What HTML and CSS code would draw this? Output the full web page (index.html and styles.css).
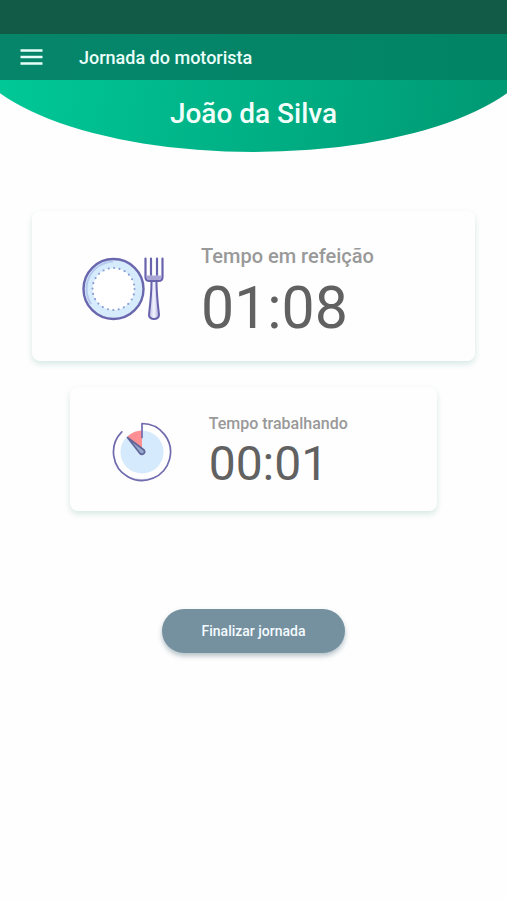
FILE: index.html
```html
<!DOCTYPE html>
<html lang="pt-BR">
<head>
    <meta charset="UTF-8">
    <meta name="viewport" content="width=device-width, initial-scale=1.0">
    <title>Jornada do motorista</title>
    <link rel="stylesheet" href="styles.css">
</head>
<body>
    <div class="status-bar"></div>
    <header class="app-bar">
        <button class="menu-btn" type="button" aria-label="Menu">
            <svg viewBox="0 0 22 16">
                <path d="M0 1.5h22M0 8h22M0 14.5h22"/>
            </svg>
        </button>
        <h1>Jornada do motorista</h1>
    </header>
    <div class="hero">
        <h2>João da Silva</h2>
    </div>

    <main class="content">
        <section class="card card-large">
            <!-- Plate and fork -->
            <svg class="meal-icon" viewBox="0 0 82 64">
                <defs>
                    <linearGradient id="handle" x1="0" x2="1" y1="0" y2="0">
                        <stop offset="0" stop-color="#b9b6e0"/>
                        <stop offset="0.5" stop-color="#f4f5ff"/>
                        <stop offset="1" stop-color="#a9a6d6"/>
                    </linearGradient>
                </defs>
                <circle cx="31.5" cy="32" r="30" fill="#d6ebfc" stroke="#6a67ae" stroke-width="2.4"/>
                <path d="M9 47A27.5 27.5 0 0 1 31 4.5" fill="none" stroke="#b5c9ee" stroke-width="2"/>
                <circle cx="31.5" cy="32" r="21" fill="#fff"/>
                <circle cx="31.5" cy="32" r="21" fill="none" stroke="#8ba0d5" stroke-width="2.2" stroke-linecap="round" stroke-dasharray="0 5.498"/>
                <path d="M63.5 1.5V20q0 4 4 4h9q4 0 4-4V1.5M69 1.5V18M75 1.5V18" fill="none" stroke="#6863ad" stroke-width="2.2" stroke-linecap="round"/>
                <path d="M64.5 18.500h15q0 4.500-3 4.500h-9q-3 0-3-4.500z" fill="#a9a6d6"/>
                <path d="M69.5 24h5q0 13 2.5 33.500c.5 6-10.500 6-10 0Q69.500 37 69.500 24z" fill="url(#handle)" stroke="#6863ad" stroke-width="2" stroke-linejoin="round"/>
            </svg>
            <div class="card-text">
                <p class="label">Tempo em refeição</p>
                <p class="time">01:08</p>
            </div>
        </section>

        <section class="card card-small">
            <!-- Stopwatch -->
            <svg class="clock-icon" viewBox="0 0 60 60">
                <circle cx="30" cy="30" r="21.5" fill="#d6eafd"/>
                <path d="M30 30L15.5 14.5A21.5 21.5 0 0 1 30 8.5z" fill="#ff8f92"/>
                <path d="M8 48A28 28 0 0 0 52 48A29 26 0 0 1 8 48z" fill="#cdcce8"/>
                <path d="M30 15.5V1.5A28.5 28.5 0 1 1 9.8 9.9" fill="none" stroke="#6f6bae" stroke-width="1.7" stroke-linejoin="round" stroke-linecap="round"/>
                <path d="M15.500 15.500L32 28q1.500 2-.3 3.600t-3.700-.1z" fill="#94a9cc" stroke="#5f6499" stroke-width="1.7" stroke-linejoin="round"/>
            </svg>
            <div class="card-text">
                <p class="label">Tempo trabalhando</p>
                <p class="time">00:01</p>
            </div>
        </section>

        <button class="finish-btn" type="button">Finalizar jornada</button>
    </main>
</body>
</html>
```
FILE: styles.css
```css
* {
    box-sizing: border-box;
}
body {
    margin: 0;
    min-height: 100vh;
    background: #fefefe;
    font-family: Roboto, Arial, sans-serif;
}
h1, h2, p {
    margin: 0;
}
.status-bar {
    height: 34px;
    background: #115b47;
}
.app-bar {
    display: flex;
    align-items: center;
    gap: 36px;
    height: 46px;
    padding: 0 20px;
    background: linear-gradient(90deg, #06856a, #018465);
}
.app-bar h1 {
    color: #eafff9;
    font-size: 18px;
    font-weight: 500;
}
.menu-btn {
    display: flex;
    padding: 0;
    border: none;
    background: none;
    cursor: pointer;
}
.menu-btn svg {
    width: 23px;
    height: 16px;
    stroke: #e6fff8;
    stroke-width: 2.5;
}
.hero {
    height: 72px;
    padding-top: 16px;
    background: linear-gradient(100deg, #00c897, #009873);
    clip-path: ellipse(57% 113px at 50% -41px);
    text-align: center;
}
.hero h2 {
    color: #f2fffb;
    font-size: 28px;
    font-weight: 500;
    line-height: 36px;
}
.content {
    display: flex;
    flex-direction: column;
    align-items: center;
    padding: 59px 32px 32px;
}
.card {
    display: flex;
    align-items: center;
    padding-top: 6px;
    background: #fefefe;
    border-radius: 8px;
    box-shadow: 0 3px 6px rgba(0, 120, 95, 0.16);
}
.card-large {
    width: 100%;
    height: 150px;
    padding-left: 50px;
    gap: 37px;
}
.card-small {
    width: 83%;
    height: 124px;
    margin-top: 26px;
    padding-left: 42px;
    gap: 37px;
}
.meal-icon {
    width: 82px;
    height: 64px;
}
.clock-icon {
    width: 60px;
    height: 60px;
}
.label {
    color: #999;
    font-size: 16px;
    font-weight: 500;
    line-height: 24px;
}
.time {
    color: #616161;
    font-size: 48px;
    line-height: 56px;
}
.card-large .card-text {
    padding-top: 10px;
}
.card-large .label {
    margin-bottom: 4px;
    font-size: 20px;
}
.card-large .time {
    font-size: 59px;
    line-height: 72px;
}
.finish-btn {
    height: 44px;
    margin-top: 98px;
    padding: 0 40px;
    border: none;
    border-radius: 22px;
    background: #75919f;
    box-shadow: 0 3px 5px rgba(40, 80, 100, 0.35);
    color: #f4fbff;
    font-family: inherit;
    font-size: 14px;
    font-weight: 500;
    cursor: pointer;
}
```
